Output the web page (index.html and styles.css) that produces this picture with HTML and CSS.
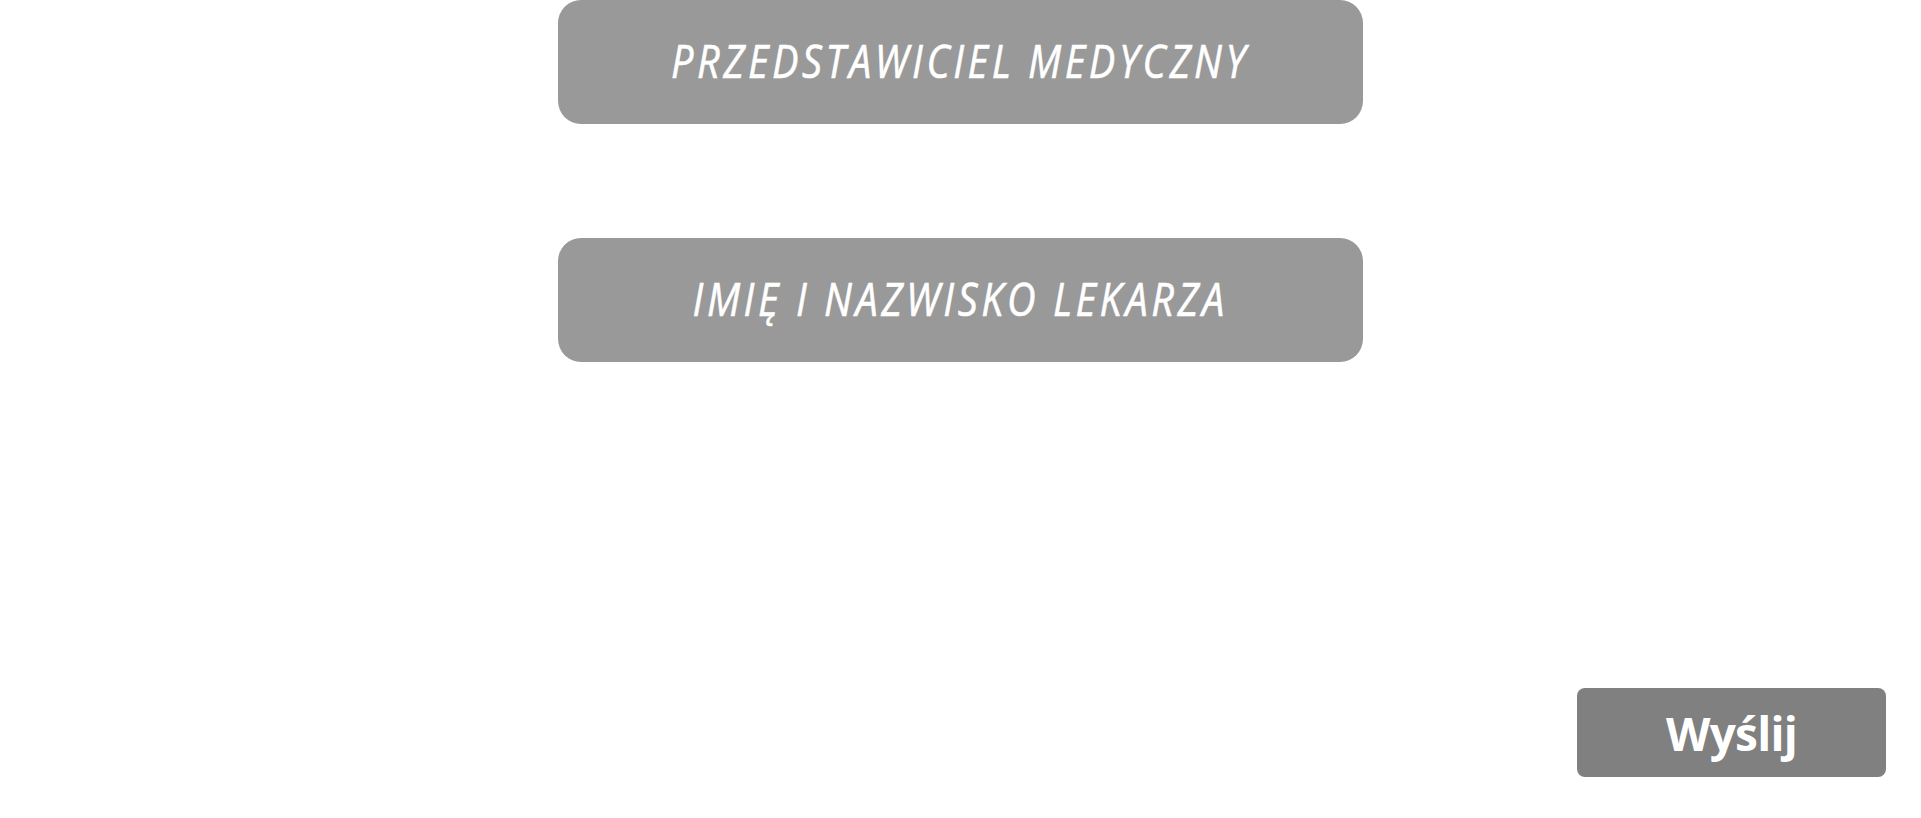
FILE: index.html
```html
<!DOCTYPE html>
<html lang="pl">
<head>
<meta charset="utf-8">
<title>Formularz</title>
<link rel="stylesheet" href="styles.css">
</head>
<body>
<div class="page">
  <div class="fields">
    <div class="field"><span class="label">PRZEDSTAWICIEL MEDYCZNY</span></div>
    <div class="field"><span class="label">IMIĘ I NAZWISKO LEKARZA</span></div>
  </div>
  <div class="actions">
    <button class="send" type="button">Wyślij</button>
  </div>
</div>
</body>
</html>
```
FILE: styles.css
```css
html, body {
  margin: 0;
  padding: 0;
  background: #ffffff;
}
.page {
  width: 1921px;
  height: 818px;
  display: flex;
  flex-direction: column;
}
.fields {
  display: flex;
  flex-direction: column;
  align-items: center;
  gap: 114px;
}
.field {
  width: 805px;
  height: 124px;
  background: #999999;
  border-radius: 23px;
  display: flex;
  align-items: center;
  justify-content: center;
}
.label {
  display: inline-block;
  font-family: "Open Sans", sans-serif;
  font-style: italic;
  font-weight: 400;
  font-size: 46px;
  letter-spacing: 4.2px;
  color: #ffffff;
  transform: scaleX(0.86);
  white-space: nowrap;
  margin-top: -4px;
  -webkit-text-stroke: 0.6px #ffffff;
}
.actions {
  display: flex;
  justify-content: flex-end;
  padding-top: 326px;
  padding-right: 35px;
}
.send {
  width: 309px;
  height: 89px;
  border: none;
  border-radius: 8px;
  background: #808080;
  color: #ffffff;
  font-family: "Open Sans", sans-serif;
  font-weight: 700;
  font-size: 46px;
  letter-spacing: -0.8px;
  padding: 0;
  line-height: 1;
}
```
